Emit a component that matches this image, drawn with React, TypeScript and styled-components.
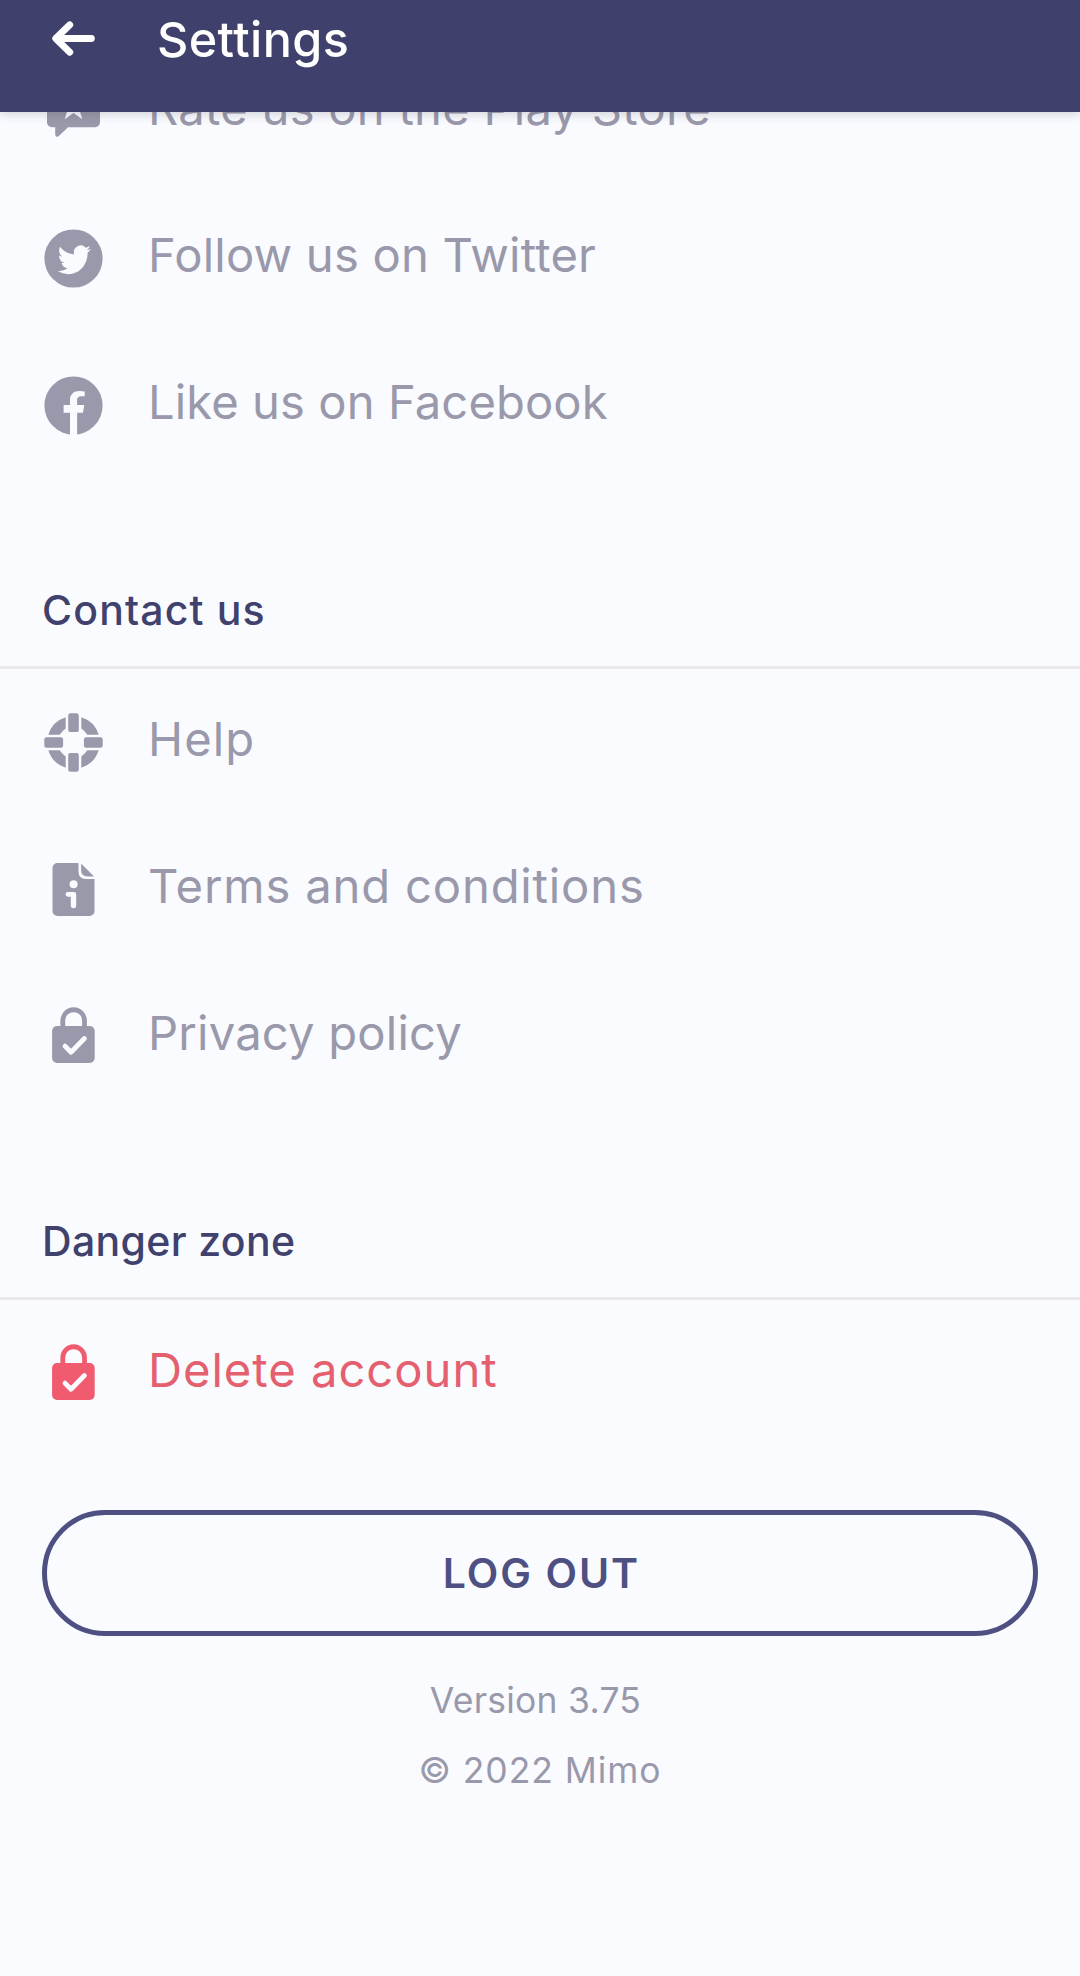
import React from "react";
import styled, { createGlobalStyle } from "styled-components";

const colors = {
  bar: "#3f406c",
  page: "#f9fbff",
  muted: "#9999ab",
  heading: "#40416d",
  accent: "#4e5082",
  danger: "#f15b6f",
  dangerText: "#e4606f",
  divider: "#e9e9ec",
};

const GlobalStyle = createGlobalStyle`
  *, *::before, *::after { box-sizing: border-box; }
  html, body, #root { height: 100%; }
  body {
    margin: 0;
    overflow: hidden;
    background: ${colors.page};
    font-family: Inter, "Liberation Sans", sans-serif;
  }
`;

const Screen = styled.div`
  display: flex;
  flex-direction: column;
  width: 1080px;
  height: 1976px;
  overflow: hidden;
  background: ${colors.page};
`;

const AppBar = styled.header`
  position: relative;
  z-index: 1;
  display: flex;
  flex: none;
  align-items: center;
  height: 112px;
  padding: 0 42px 35px;
  background: ${colors.bar};
  color: #fff;
  box-shadow: 0 2px 10px rgba(40, 40, 60, 0.2);
`;

const Title = styled.h1`
  margin: 2px 0 0 54px;
  font-size: 48.5px;
  font-weight: 500;
  line-height: 60px;
  letter-spacing: 0.4px;
`;

const Content = styled.main`
  display: flex;
  flex-direction: column;
  margin-top: -74px;
`;

const Row = styled.a<{ $danger?: boolean }>`
  display: flex;
  align-items: center;
  gap: 44px;
  height: 147px;
  padding: 0 43px;
  color: ${(p) => (p.$danger ? colors.danger : colors.muted)};
`;

const RowLabel = styled.span<{ $tracking: number; $danger?: boolean }>`
  padding-bottom: 8px;
  font-size: 47.2px;
  line-height: 60px;
  letter-spacing: ${(p) => p.$tracking}px;
  white-space: nowrap;
  color: ${(p) => (p.$danger ? colors.dangerText : "inherit")};
`;

const SectionTitle = styled.h2<{ $tracking: number }>`
  display: flex;
  align-items: flex-end;
  height: 190px;
  margin: 0;
  padding: 0 42px 31px;
  border-bottom: 3px solid ${colors.divider};
  color: ${colors.heading};
  font-size: 41px;
  font-weight: 500;
  line-height: 49px;
  letter-spacing: ${(p) => p.$tracking}px;
`;

const LogoutButton = styled.button`
  height: 126px;
  margin: 63px 42px 0;
  padding: 0 0 0 3px;
  border: 5px solid ${colors.accent};
  border-radius: 63px;
  background: transparent;
  color: ${colors.accent};
  font-family: inherit;
  font-size: 41px;
  font-weight: 600;
  letter-spacing: 2px;
`;

const Footer = styled.footer`
  display: flex;
  flex-direction: column;
  align-items: center;
  margin-top: 30px;
`;

const FooterLine = styled.p<{ $tracking: number; $endSpace?: number }>`
  margin: 0;
  padding-right: ${(p) => p.$endSpace ?? 0}px;
  color: ${colors.muted};
  font-size: 35.5px;
  line-height: 70px;
  letter-spacing: ${(p) => p.$tracking}px;
`;

const Icon = styled.svg.attrs({ viewBox: "0 0 61 61", "aria-hidden": true })`
  flex: none;
  width: 61px;
  height: 61px;
  fill: currentColor;
`;

const BackIcon = () => (
  <Icon>
    <path
      d="M49.4 30.5H14M27.8 16.8L13.7 30.5L27.8 44.2"
      fill="none"
      stroke="currentColor"
      strokeWidth="6.8"
      strokeLinecap="round"
      strokeLinejoin="round"
    />
  </Icon>
);

const RateIcon = () => (
  <Icon>
    <path d="M9 4H52a5 5 0 0 1 5 5V41.3a5 5 0 0 1-5 5H25L15.6 55.2Q12.3 57.2 12.2 53V46.3H9a5 5 0 0 1-5-5V9a5 5 0 0 1 5-5Z" />
    <path
      d="M30.5 11L34 21.2L44.8 21.4L36.2 27.9L39.3 38.2L30.5 32L21.7 38.2L24.8 27.9L16.2 21.4L27 21.2Z"
      fill={colors.page}
    />
  </Icon>
);

const TwitterIcon = () => (
  <Icon>
    <circle cx="30.5" cy="30.5" r="29.1" />
    <path
      transform="translate(14.8 14.2) scale(1.38 1.47)"
      fill={colors.page}
      d="M23.953 4.57a10 10 0 01-2.825.775 4.958 4.958 0 002.163-2.723c-.951.555-2.005.959-3.127 1.184a4.92 4.92 0 00-8.384 4.482C7.69 8.095 4.067 6.13 1.64 3.162a4.822 4.822 0 00-.666 2.475c0 1.71.87 3.213 2.188 4.096a4.904 4.904 0 01-2.228-.616v.06a4.923 4.923 0 003.946 4.827 4.996 4.996 0 01-2.212.085 4.936 4.936 0 004.604 3.417 9.867 9.867 0 01-6.102 2.105c-.39 0-.779-.023-1.17-.067a13.995 13.995 0 007.557 2.209c9.053 0 13.998-7.496 13.998-13.985 0-.21 0-.42-.015-.63A9.935 9.935 0 0024 4.59z"
    />
  </Icon>
);

const FacebookIcon = () => (
  <Icon>
    <circle cx="30.5" cy="30.5" r="29.1" />
    <path
      fill={colors.page}
      d="M27 61V37.8H20.6V30H27V25.2C27 19.3 30.6 16 36.6 16Q39.5 16 41.7 16.4V21.2H38.5C35.2 21.2 34.1 23 34.1 25.3V30H41.2L40 37.8H34.1V61Z"
    />
  </Icon>
);

const HelpIcon = () => (
  <Icon>
    {[0, 90, 180, 270].map((angle) => (
      <g key={angle} transform={`rotate(${angle} 30.5 30.5)`}>
        <rect x="25.2" y="1.3" width="10.6" height="18.8" rx="2.2" />
        <path d="M22.7 5.3A26.4 26.4 0 0 0 5.3 22.7H16.6Q19.2 19.2 22.7 16.6Z" />
      </g>
    ))}
  </Icon>
);

const TermsIcon = () => (
  <Icon>
    <path d="M14.5 4H35.5V12.5Q35.5 20 43 20H51.5V52a5 5 0 0 1-5 5H14.5a5 5 0 0 1-5-5V9a5 5 0 0 1 5-5Z" />
    <path d="M38.1 4.4L51 17.4H44.5Q38.1 17.4 38.1 11Z" />
    <circle cx="30.6" cy="25.3" r="4" fill={colors.page} />
    <path
      fill={colors.page}
      d="M24.9 33H31a2.2 2.2 0 0 1 2.2 2.2V46.5a2.7 2.7 0 0 1-5.4 0V37.7H24.9a2.35 2.35 0 0 1 0-4.7Z"
    />
  </Icon>
);

const LockIcon = () => (
  <Icon>
    <rect x="9.1" y="20" width="42.6" height="37" rx="5" />
    <path d="M19.8 22V14.6a10.85 10.85 0 0 1 21.7 0V22" fill="none" stroke="currentColor" strokeWidth="4.8" />
    <path
      d="M22 40.1L28 46.2L41.4 32.5"
      fill="none"
      stroke={colors.page}
      strokeWidth="4.8"
      strokeLinecap="round"
      strokeLinejoin="round"
    />
  </Icon>
);

type Item = { label: string; icon: React.ReactNode; tracking: number };

const socialItems: Item[] = [
  { label: "Rate us on the Play Store", icon: <RateIcon />, tracking: 0.23 },
  { label: "Follow us on Twitter", icon: <TwitterIcon />, tracking: 0.2 },
  { label: "Like us on Facebook", icon: <FacebookIcon />, tracking: 0.07 },
];

const contactItems: Item[] = [
  { label: "Help", icon: <HelpIcon />, tracking: 1.1 },
  { label: "Terms and conditions", icon: <TermsIcon />, tracking: 0.82 },
  { label: "Privacy policy", icon: <LockIcon />, tracking: 0.2 },
];

const dangerItems: Item[] = [{ label: "Delete account", icon: <LockIcon />, tracking: 0.96 }];

const Rows = ({ items, danger }: { items: Item[]; danger?: boolean }) => (
  <>
    {items.map((item) => (
      <Row key={item.label} $danger={danger}>
        {item.icon}
        <RowLabel $tracking={item.tracking} $danger={danger}>
          {item.label}
        </RowLabel>
      </Row>
    ))}
  </>
);

export default function App() {
  return (
    <>
      <GlobalStyle />
      <Screen>
        <AppBar>
          <BackIcon />
          <Title>Settings</Title>
        </AppBar>
        <Content>
          <Rows items={socialItems} />
          <SectionTitle $tracking={1.15}>Contact us</SectionTitle>
          <Rows items={contactItems} />
          <SectionTitle $tracking={0.35}>Danger zone</SectionTitle>
          <Rows items={dangerItems} danger />
          <LogoutButton>LOG OUT</LogoutButton>
          <Footer>
            <FooterLine $tracking={0.24} $endSpace={9}>
              Version 3.75
            </FooterLine>
            <FooterLine $tracking={0.93}>© 2022 Mimo</FooterLine>
          </Footer>
        </Content>
      </Screen>
    </>
  );
}
